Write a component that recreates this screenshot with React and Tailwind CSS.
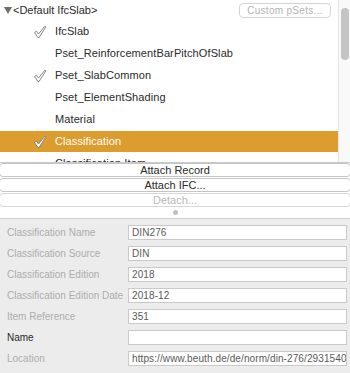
import React from "react";

const Check = () => (
  <svg width="14" height="14" viewBox="0 0 14 14" className="block">
    <path d="M1.5 7.5 L3.5 6.2 L5.5 9 L11.8 1.2 L12.8 1.8 L6 12.6 L5 12.6 Z" fill="#ffffff" stroke="#7a7a7a" strokeWidth="0.9" strokeLinejoin="round" />
  </svg>
);

const rows = [
  { label: "IfcSlab", check: true },
  { label: "Pset_ReinforcementBarPitchOfSlab", check: false },
  { label: "Pset_SlabCommon", check: true },
  { label: "Pset_ElementShading", check: false },
  { label: "Material", check: false },
  { label: "Classification", check: true, selected: true },
  { label: "Classification Item", check: false },
];

const fields = [
  { label: "Classification Name", value: "DIN276" },
  { label: "Classification Source", value: "DIN" },
  { label: "Classification Edition", value: "2018" },
  { label: "Classification Edition Date", value: "2018-12" },
  { label: "Item Reference", value: "351" },
  { label: "Name", value: "", dark: true },
  { label: "Location", value: "https://www.beuth.de/de/norm/din-276/293154045" },
];

export default function App() {
  return (
    <div className="w-[350px] h-[373px] overflow-hidden bg-white text-[11px] text-[#2a2a2a]" style={{ fontFamily: "'Liberation Sans', Arial, sans-serif" }}>
      <div className="h-[162px] flex overflow-hidden">
        <div className="flex-1 overflow-hidden">
          <div className="h-[21px] flex items-center relative">
            <svg width="8" height="7" viewBox="0 0 8 7" className="ml-[4px] block">
              <path d="M0 0 H8 L4 7 Z" fill="#6e6e6e" />
            </svg>
            <span className="ml-[1px]">&lt;Default IfcSlab&gt;</span>
            <div className="absolute left-[239px] top-[3px] w-[92px] h-[15px] border border-[#d4d4d4] rounded-[4px] flex items-center justify-center text-[10px] tracking-[0.3px] text-[#b4b4b4]">
              Custom pSets...
            </div>
          </div>
          {rows.map((r) => (
            <div key={r.label} className="h-[22px]">
              <div className={`h-[21px] flex items-center ${r.selected ? "bg-[#dd9c2e] text-white" : ""}`}>
                <div className="w-[55px] pl-[33px] flex items-center">{r.check && <Check />}</div>
                <span className="whitespace-nowrap tracking-[0.1px]">{r.label}</span>
              </div>
            </div>
          ))}
        </div>
        <div className="w-[12px] bg-[#f9f9f9] border-l border-[#e6e6e6] pt-[8px] pl-[2px] pr-[1px]">
          <div className="h-[52px] rounded-full bg-[#c4c4c4]"></div>
        </div>
      </div>
      <div className="h-[1px] bg-[#c8c8c8]"></div>
      <div className="flex flex-col gap-[1px]">
        <div className="h-[14px] mx-[-1px] border border-[#c6c6c6] rounded-[4px] flex items-center justify-center text-[#2a2a2a]">Attach Record</div>
        <div className="h-[14px] mx-[-1px] border border-[#c6c6c6] rounded-[4px] flex items-center justify-center text-[#2a2a2a]">Attach IFC...</div>
        <div className="h-[14px] mx-[-1px] border border-[#d6d6d6] rounded-[4px] flex items-center justify-center text-[#b8b8b8]">Detach...</div>
      </div>
      <div className="h-[11px] flex items-center justify-center">
        <div className="w-[5px] h-[5px] rounded-full bg-[#c0c0c0]"></div>
      </div>
      <div className="h-[1px] bg-[#cfcfcf]"></div>
      <div className="h-[160px] bg-[#ececec] pt-[6px] flex flex-col gap-[6px] text-[10px]">
        {fields.map((f) => (
          <div key={f.label} className="h-[15px] flex items-center">
            <div className={`w-[128px] pl-[7px] whitespace-nowrap ${f.dark ? "text-[#2a2a2a]" : "text-[#acacac]"}`}>{f.label}</div>
            <div className="w-[219px] h-[15px] bg-white border border-[#cacaca] flex items-center px-[3px] overflow-hidden whitespace-nowrap text-[#5a5a5a] tracking-[0.1px]">
              {f.value}
            </div>
          </div>
        ))}
      </div>
    </div>
  );
}
